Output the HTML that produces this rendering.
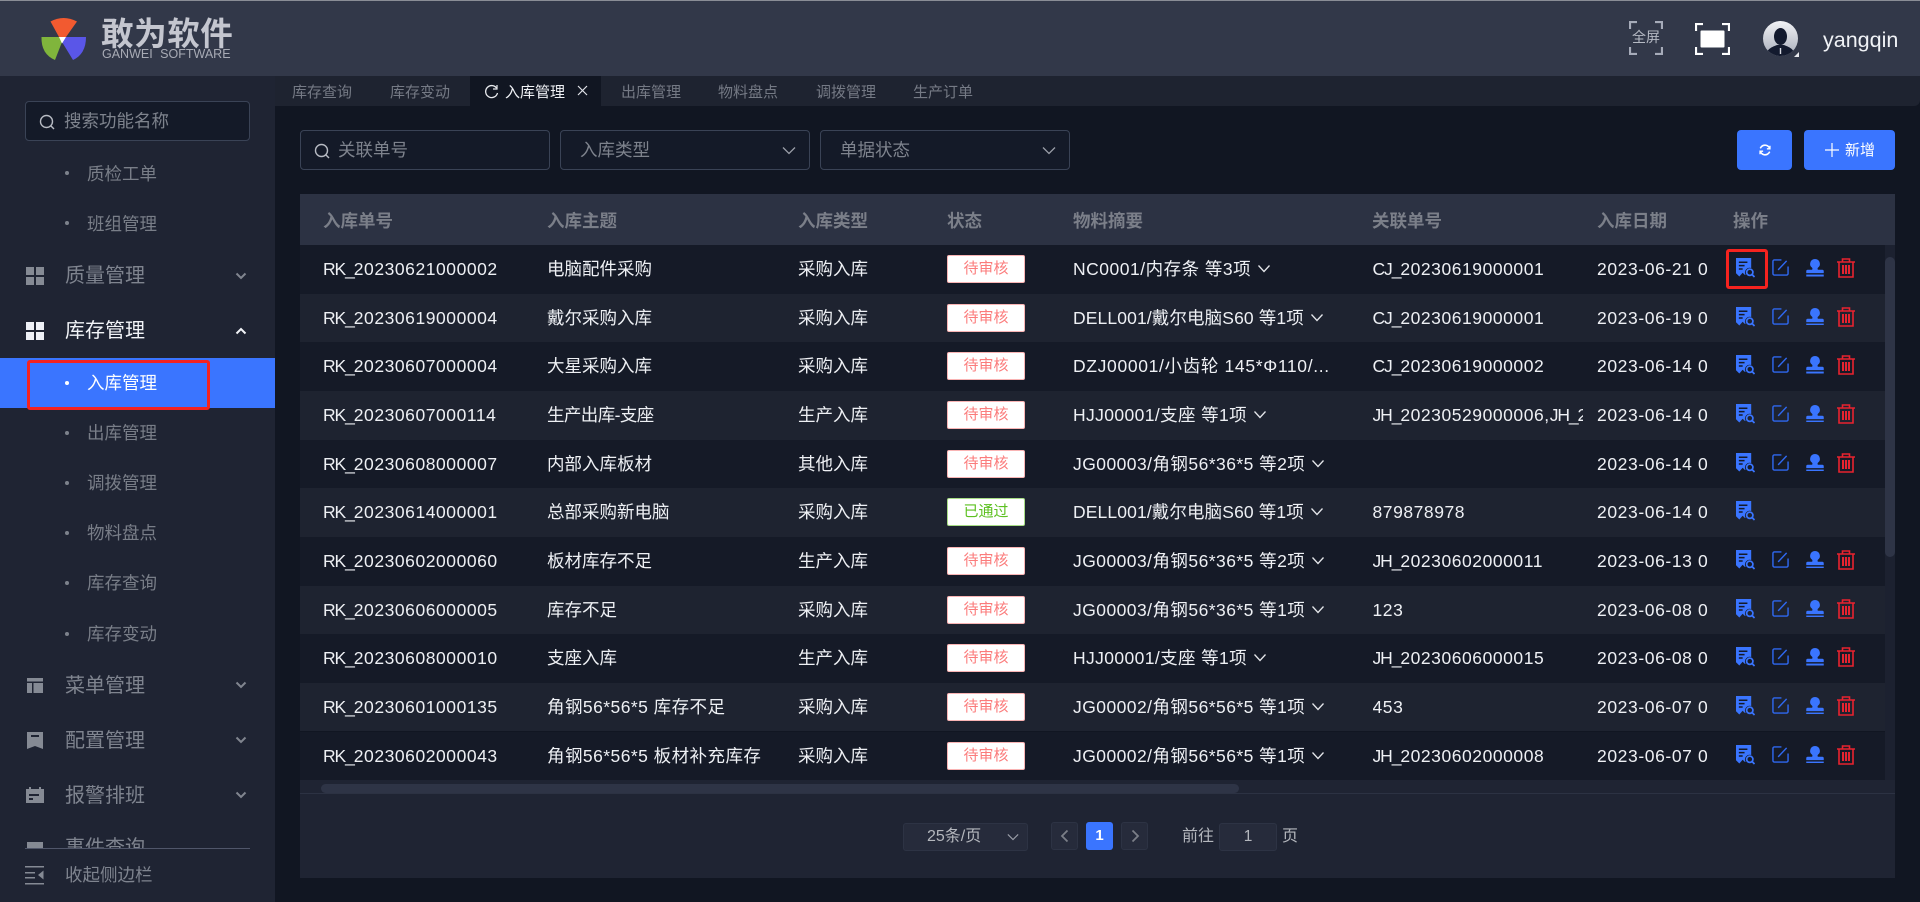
<!DOCTYPE html>
<html lang="zh"><head><meta charset="utf-8"><title>入库管理</title>
<style>
*{box-sizing:border-box}
html,body{margin:0;padding:0;width:1920px;height:902px;overflow:hidden;background:#111622;font-family:"Liberation Sans","Noto Sans CJK SC",sans-serif}
.a{position:absolute;white-space:nowrap}
#hd{left:0;top:0;width:1920px;height:76px;background:#323849;border-top:1px solid #8a8d96}
#sb{left:0;top:76px;width:275px;height:826px;background:#1f2433}
#tabs{left:275px;top:76px;width:1645px;height:30px;background:#1e2330;border-bottom-right-radius:6px}
#atab{left:470px;top:76px;width:131px;height:30px;background:#111622}
.tab{top:82px;font-size:15px;line-height:22px;color:#757a85}
.box{border:1px solid #3a4356;border-radius:4px;background:#141a28}
.ph{font-size:17.5px;color:#7e838d;line-height:26px}
.sub{left:87px;font-size:17.5px;line-height:26px;color:#797e88}
.dot{left:65px;width:4px;height:4px;border-radius:50%;background:#7d828c}
.top{left:65px;font-size:20px;line-height:30px;color:#7f848f}
.chev{left:235px}
.th{top:208px;font-size:17.5px;line-height:26px;font-weight:bold;color:#7b7f89}
.r{position:absolute;left:300px;width:1585px;height:48.65px;overflow:hidden}
.r.d{background:#151a27}.r.l{background:#1e2330}
.r span.t{position:absolute;top:11px;line-height:26px;font-size:17.5px;color:#eef0f4;white-space:nowrap}
.c1{left:23px;letter-spacing:.55px}.c2{left:247px}.c3{left:498px}
.c5{left:773px;letter-spacing:.35px}.c6{left:1072.5px;width:210px;overflow:hidden;letter-spacing:.55px}.c7{left:1297px;width:113px;overflow:hidden;letter-spacing:.6px}
i.p{font-style:normal;letter-spacing:-1.1px}
.tag{position:absolute;left:647px;top:10px;width:78px;height:28px;background:#fff;border:1px solid #f9b4b4;border-radius:2px;color:#fb7c7c;font-size:15px;line-height:26px;text-align:center}
.tag.g{border-color:#a7dd85;color:#5cc020}
.op{position:absolute;top:0;left:1410px;width:175px;height:100%}
.op svg{position:absolute}
svg.i1{left:26px;top:13px;width:19px;height:20px}svg.i2{left:62px;top:14px;width:17px;height:17px}svg.i3{left:96px;top:14px;width:18px;height:17.5px}svg.i4{left:127px;top:13px;width:18px;height:20px}
.cv{display:inline-block;vertical-align:2px;margin-left:6px;width:14px;height:9px}
</style></head><body>
<svg width="0" height="0" style="position:absolute">
<symbol id="doc" viewBox="0 0 20 21"><path d="M0 0H16V10.500A5 5 0 0 0 10 17.500L9.500 18 7 15.500 3.500 19.500 0 16Z" fill="#3a75ff"/><path d="M3 4.500H12M3 8H9M3 11.500H7" stroke="#141a28" stroke-width="1.600"/><circle cx="14.500" cy="15" r="3.300" fill="none" stroke="#3a75ff" stroke-width="1.800"/><path d="M17 17.500L19.500 20" stroke="#3a75ff" stroke-width="1.800"/></symbol>
<symbol id="edit" viewBox="0 0 18 18"><path d="M10 1H2.500A1.500 1.500 0 0 0 1 2.500V15.500A1.500 1.500 0 0 0 2.500 17H15.500A1.500 1.500 0 0 0 17 15.500V8M6.500 11.500L15.500 2" fill="none" stroke="#2f68f0" stroke-width="1.500"/></symbol>
<symbol id="stamp" viewBox="0 0 18 18"><path d="M9 0A5 5 0 0 0 6 9C6.500 9.500 6.500 10.500 6 11H1.500A1.500 1.500 0 0 0 0 12.500V14.500H18V12.500A1.500 1.500 0 0 0 16.500 11H12C11.500 10.500 11.500 9.500 12 9A5 5 0 0 0 9 0Z" fill="#3a75ff"/><rect x="0" y="16" width="18" height="2" fill="#3a75ff"/></symbol>
<symbol id="trash" viewBox="0 0 18 20"><path d="M0 4H18M5.500 4V1H12.500V4M2 4V19H16V4" fill="none" stroke="#e8232f" stroke-width="1.600"/><rect x="5" y="7" width="8" height="9" fill="#e8232f"/><path d="M7.500 7V16M10.500 7V16" stroke="#1c2130" stroke-width="1"/></symbol>
<symbol id="cv" viewBox="0 0 14 9"><path d="M1.500 1.500L7 7.500 12.500 1.500" fill="none" stroke="#e4e6ea" stroke-width="1.300"/></symbol>
<symbol id="mc" viewBox="0 0 12 8"><path d="M1.500 1.500L6 6 10.500 1.500" fill="none" stroke="#80858f" stroke-width="2"/></symbol>
<symbol id="sel" viewBox="0 0 14 9"><path d="M1 1.500L7 7.500 13 1.500" fill="none" stroke="#9a9ea8" stroke-width="1.300"/></symbol>
<symbol id="mag" viewBox="0 0 16 16"><circle cx="7.500" cy="7.500" r="6" fill="none" stroke="#b8bcc4" stroke-width="1.400"/><path d="M12 12L15 15" stroke="#b8bcc4" stroke-width="1.400"/></symbol>
</svg>

<div class="a" id="hd"></div>
<svg class="a" style="left:40px;top:16px" width="48" height="46" viewBox="40 16 48 46">
<path d="M50.500 21.500Q63.500 14.500 77 21.500L66 37H59Z" fill="#f25a30"/>
<path d="M41.500 37H59L62 42 55 60Q41 54 41.500 37Z" fill="#80b53c"/>
<path d="M66 37H86Q86 54 73 60L62 42Z" fill="#5a56e8"/>
<path d="M59 37H66L62 43.500Z" fill="#fff"/>
</svg>
<div class="a" style="left:101px;top:15px;font-size:32.500px;line-height:38px;font-weight:bold;color:#c4c6cf;letter-spacing:.6px">敢为软件</div>
<div class="a" style="left:102px;top:47px;font-size:12.500px;line-height:14px;color:#a8abb5;word-spacing:4px">GANWEI SOFTWARE</div>

<svg class="a" style="left:1629px;top:21px" width="34" height="34" viewBox="0 0 34 34" fill="none" stroke="#a6abb9" stroke-width="2.200"><path d="M1 8V1H8M26 1H33V8M1 26V33H8M26 33H33V26"/></svg>
<div class="a" style="left:1632px;top:27px;font-size:14px;line-height:21px;color:#b6bac4">全屏</div>
<svg class="a" style="left:1695px;top:23px" width="35" height="32" viewBox="0 0 35 32" fill="none" stroke="#fff" stroke-width="2.200"><path d="M1 8V1H8M27 1H34V8M1 24V31H8M27 31H34V24"/><rect x="5.500" y="7.500" width="24" height="17" rx="1" fill="#fff" stroke="none"/></svg>
<svg class="a" style="left:1763px;top:21px" width="36" height="36" viewBox="0 0 36 36"><defs><linearGradient id="av" x1="0" y1="0" x2="0" y2="1"><stop offset="0" stop-color="#f2f3f6"/><stop offset="1" stop-color="#a8adba"/></linearGradient><clipPath id="ac"><circle cx="17.500" cy="17.500" r="17.500"/></clipPath></defs><circle cx="17.500" cy="17.500" r="17.500" fill="url(#av)"/><g clip-path="url(#ac)"><ellipse cx="17.500" cy="15.500" rx="6.500" ry="8.500" fill="#131a2e"/><path d="M3 36C3 28 9 26 14 24H21C26 26 32 28 32 36Z" fill="#131a2e"/><path d="M16.800 27H18.200V33H16.800Z" fill="#d8dae2"/></g><path d="M36 36H31L36 31Z" fill="#e8e9ee"/></svg>
<div class="a" style="left:1823px;top:27px;font-size:21.500px;line-height:27px;color:#f0f2f6">yangqin</div>

<div class="a" id="sb"></div>
<div class="a box" style="left:25px;top:101px;width:225px;height:40px;background:#141a28"></div>
<svg class="a" style="left:39px;top:114px" width="16" height="16"><use href="#mag"/></svg>
<div class="a ph" style="left:64px;top:108px">搜索功能名称</div>

<div class="a dot" style="top:171px"></div><div class="a sub" style="top:161px">质检工单</div>
<div class="a dot" style="top:221px"></div><div class="a sub" style="top:211px">班组管理</div>

<svg class="a" style="left:26px;top:267px" width="18" height="18" fill="#858a94"><rect width="8" height="8"/><rect x="10" width="8" height="8"/><rect y="10" width="8" height="8"/><rect x="10" y="10" width="8" height="8"/></svg>
<div class="a top" style="top:261px">质量管理</div>
<svg class="a chev" style="top:272px" width="12" height="8"><use href="#mc"/></svg>

<svg class="a" style="left:26px;top:322px" width="18" height="18" fill="#eef0f6"><rect width="8" height="8"/><rect x="10" width="8" height="8"/><rect y="10" width="8" height="8"/><rect x="10" y="10" width="8" height="8"/></svg>
<div class="a top" style="top:316px;color:#f2f4f8">库存管理</div>
<svg class="a chev" style="top:327px" width="12" height="8" viewBox="0 0 12 8"><path d="M1.500 6.500L6 2 10.500 6.500" fill="none" stroke="#f2f4f8" stroke-width="2"/></svg>

<div class="a" style="left:0;top:358px;width:275px;height:50px;background:#3a75ff"></div>
<div class="a dot" style="top:381px;background:#fff"></div><div class="a sub" style="top:370px;color:#fff">入库管理</div>
<div class="a" style="left:27px;top:360px;width:183px;height:50px;border:3px solid #f5231f;border-radius:3px"></div>

<div class="a dot" style="top:431px"></div><div class="a sub" style="top:420px">出库管理</div>
<div class="a dot" style="top:481px"></div><div class="a sub" style="top:470px">调拨管理</div>
<div class="a dot" style="top:531px"></div><div class="a sub" style="top:520px">物料盘点</div>
<div class="a dot" style="top:581px"></div><div class="a sub" style="top:570px">库存查询</div>
<div class="a dot" style="top:632px"></div><div class="a sub" style="top:621px">库存变动</div>

<svg class="a" style="left:27px;top:678px" width="16" height="15" fill="#858a94"><rect width="16" height="3.500"/><rect y="5" width="5" height="10"/><rect x="6.500" y="5" width="9.500" height="10"/></svg>
<div class="a top" style="top:671px">菜单管理</div>
<svg class="a chev" style="top:681px" width="12" height="8"><use href="#mc"/></svg>

<svg class="a" style="left:27px;top:732px" width="16" height="17" fill="#858a94"><path d="M0 0H16V17L8 14 0 17ZM4 3V5H12V3Z" fill-rule="evenodd"/></svg>
<div class="a top" style="top:726px">配置管理</div>
<svg class="a chev" style="top:736px" width="12" height="8"><use href="#mc"/></svg>

<svg class="a" style="left:26px;top:786px" width="18" height="17" fill="#858a94"><path d="M0 3H3V1H5V3H13V1H15V3H18V17H0ZM3 8V10H13V8ZM3 12V14H7V12Z" fill-rule="evenodd"/></svg>
<div class="a top" style="top:781px">报警排班</div>
<svg class="a chev" style="top:791px" width="12" height="8"><use href="#mc"/></svg>

<div class="a" style="left:0;top:835px;width:275px;height:13px;overflow:hidden">
<div class="a" style="left:27px;top:7px;width:16px;height:14px;background:#858a94"></div>
<div class="a top" style="top:-2px">事件查询</div>
</div>
<div class="a" style="left:25px;top:848px;width:225px;height:1px;background:#50566a"></div>
<svg class="a" style="left:25px;top:866px" width="19" height="19" fill="#858a94"><rect width="19" height="1.500" y="0"/><rect width="10" height="1.500" y="6"/><rect width="10" height="1.500" y="11"/><rect width="19" height="1.500" y="17"/><path d="M18.500 4.500V13.500L13 9Z"/></svg>
<div class="a" style="left:65px;top:862px;font-size:17.500px;line-height:26px;color:#7f848f">收起侧边栏</div>

<div class="a" id="tabs"></div><div class="a" id="atab"></div>
<div class="a tab" style="left:292px">库存查询</div>
<div class="a tab" style="left:390px">库存变动</div>
<svg class="a" style="left:484px;top:84px" width="15" height="15" viewBox="0 0 15 15"><path d="M12.500 4A6 6 0 1 0 13.500 9" fill="none" stroke="#e8eaee" stroke-width="1.300"/><path d="M13 1V5H9" fill="none" stroke="#e8eaee" stroke-width="1.200"/></svg>
<div class="a tab" style="left:505px;color:#f0f2f6">入库管理</div>
<svg class="a" style="left:577px;top:85px" width="11" height="11"><path d="M1 1L10 10M10 1L1 10" stroke="#dfe2e8" stroke-width="1.200"/></svg>
<div class="a tab" style="left:621px">出库管理</div>
<div class="a tab" style="left:718px">物料盘点</div>
<div class="a tab" style="left:816px">调拨管理</div>
<div class="a tab" style="left:913px">生产订单</div>

<div class="a box" style="left:300px;top:130px;width:250px;height:40px"></div>
<svg class="a" style="left:314px;top:143px" width="16" height="16"><use href="#mag"/></svg>
<div class="a ph" style="left:338px;top:137px">关联单号</div>
<div class="a box" style="left:560px;top:130px;width:250px;height:40px"></div>
<div class="a ph" style="left:580px;top:137px">入库类型</div>
<svg class="a" style="left:782px;top:146px" width="14" height="9"><use href="#sel"/></svg>
<div class="a box" style="left:820px;top:130px;width:250px;height:40px"></div>
<div class="a ph" style="left:840px;top:137px">单据状态</div>
<svg class="a" style="left:1042px;top:146px" width="14" height="9"><use href="#sel"/></svg>

<div class="a" style="left:1737px;top:130px;width:55px;height:40px;background:#3a75ff;border-radius:4px"></div>
<svg class="a" style="left:1759px;top:144px" width="12" height="12" viewBox="0 0 14 14" fill="none" stroke="#fff" stroke-width="1.800"><path d="M12.500 5.500A5.800 5.800 0 0 0 2.500 3.500L1.500 5M1.500 8.500A5.800 5.800 0 0 0 11.500 10.500L12.500 9"/><path d="M12.800 2V5.600H9.200M1.200 12V8.400H4.800" stroke-width="1.500"/></svg>
<div class="a" style="left:1804px;top:130px;width:91px;height:40px;background:#3a75ff;border-radius:4px"></div>
<svg class="a" style="left:1825px;top:143px" width="14" height="14"><path d="M7 0V14M0 7H14" stroke="#fff" stroke-width="1.200"/></svg>
<div class="a" style="left:1845px;top:138px;font-size:15px;line-height:25px;color:#fff">新增</div>

<div class="a" style="left:300px;top:194px;width:1595px;height:51px;background:#2c3243"></div>
<div class="a th" style="left:323px">入库单号</div>
<div class="a th" style="left:547px">入库主题</div>
<div class="a th" style="left:798px">入库类型</div>
<div class="a th" style="left:947px">状态</div>
<div class="a th" style="left:1073px">物料摘要</div>
<div class="a th" style="left:1372px">关联单号</div>
<div class="a th" style="left:1597px">入库日期</div>
<div class="a th" style="left:1733px">操作</div>

<div class="r d" style="top:245px"><span class="t c1"><i class="p">RK_</i>20230621000002</span><span class="t c2">电脑配件采购</span><span class="t c3">采购入库</span><div class="tag">待审核</div><span class="t c5" style="letter-spacing:.5px">NC0001/内存条 等3项<svg class="cv"><use href="#cv"/></svg></span><span class="t c6"><i class="p">CJ_</i>20230619000001</span><span class="t c7">2023-06-21 0</span><div class="op"><svg class="i1"><use href="#doc"/></svg><svg class="i2"><use href="#edit"/></svg><svg class="i3"><use href="#stamp"/></svg><svg class="i4"><use href="#trash"/></svg></div></div>
<div class="r l" style="top:293.650px"><span class="t c1"><i class="p">RK_</i>20230619000004</span><span class="t c2">戴尔采购入库</span><span class="t c3">采购入库</span><div class="tag">待审核</div><span class="t c5" style="letter-spacing:.12px">DELL001/戴尔电脑S60 等1项<svg class="cv"><use href="#cv"/></svg></span><span class="t c6"><i class="p">CJ_</i>20230619000001</span><span class="t c7">2023-06-19 0</span><div class="op"><svg class="i1"><use href="#doc"/></svg><svg class="i2"><use href="#edit"/></svg><svg class="i3"><use href="#stamp"/></svg><svg class="i4"><use href="#trash"/></svg></div></div>
<div class="r d" style="top:342.300px"><span class="t c1"><i class="p">RK_</i>20230607000004</span><span class="t c2">大星采购入库</span><span class="t c3">采购入库</span><div class="tag">待审核</div><span class="t c5" style="letter-spacing:.66px">DZJ00001/小齿轮 145*Φ110/...</span><span class="t c6"><i class="p">CJ_</i>20230619000002</span><span class="t c7">2023-06-14 0</span><div class="op"><svg class="i1"><use href="#doc"/></svg><svg class="i2"><use href="#edit"/></svg><svg class="i3"><use href="#stamp"/></svg><svg class="i4"><use href="#trash"/></svg></div></div>
<div class="r l" style="top:390.950px"><span class="t c1"><i class="p">RK_</i>20230607000114</span><span class="t c2" style="letter-spacing:-.6px">生产出库-支座</span><span class="t c3">生产入库</span><div class="tag">待审核</div><span class="t c5" style="letter-spacing:.38px">HJJ00001/支座 等1项<svg class="cv"><use href="#cv"/></svg></span><span class="t c6"><i class="p">JH_</i>20230529000006,<i class="p">JH_</i>20230529000007</span><span class="t c7">2023-06-14 0</span><div class="op"><svg class="i1"><use href="#doc"/></svg><svg class="i2"><use href="#edit"/></svg><svg class="i3"><use href="#stamp"/></svg><svg class="i4"><use href="#trash"/></svg></div></div>
<div class="r d" style="top:439.600px"><span class="t c1"><i class="p">RK_</i>20230608000007</span><span class="t c2">内部入库板材</span><span class="t c3">其他入库</span><div class="tag">待审核</div><span class="t c5" style="letter-spacing:.45px">JG00003/角钢56*36*5 等2项<svg class="cv"><use href="#cv"/></svg></span><span class="t c7">2023-06-14 0</span><div class="op"><svg class="i1"><use href="#doc"/></svg><svg class="i2"><use href="#edit"/></svg><svg class="i3"><use href="#stamp"/></svg><svg class="i4"><use href="#trash"/></svg></div></div>
<div class="r l" style="top:488.250px"><span class="t c1"><i class="p">RK_</i>20230614000001</span><span class="t c2">总部采购新电脑</span><span class="t c3">采购入库</span><div class="tag g">已通过</div><span class="t c5" style="letter-spacing:.12px">DELL001/戴尔电脑S60 等1项<svg class="cv"><use href="#cv"/></svg></span><span class="t c6">879878978</span><span class="t c7">2023-06-14 0</span><div class="op"><svg class="i1"><use href="#doc"/></svg></div></div>
<div class="r d" style="top:536.900px"><span class="t c1"><i class="p">RK_</i>20230602000060</span><span class="t c2">板材库存不足</span><span class="t c3">生产入库</span><div class="tag">待审核</div><span class="t c5" style="letter-spacing:.45px">JG00003/角钢56*36*5 等2项<svg class="cv"><use href="#cv"/></svg></span><span class="t c6"><i class="p">JH_</i>20230602000011</span><span class="t c7">2023-06-13 0</span><div class="op"><svg class="i1"><use href="#doc"/></svg><svg class="i2"><use href="#edit"/></svg><svg class="i3"><use href="#stamp"/></svg><svg class="i4"><use href="#trash"/></svg></div></div>
<div class="r l" style="top:585.550px"><span class="t c1"><i class="p">RK_</i>20230606000005</span><span class="t c2">库存不足</span><span class="t c3">采购入库</span><div class="tag">待审核</div><span class="t c5" style="letter-spacing:.45px">JG00003/角钢56*36*5 等1项<svg class="cv"><use href="#cv"/></svg></span><span class="t c6">123</span><span class="t c7">2023-06-08 0</span><div class="op"><svg class="i1"><use href="#doc"/></svg><svg class="i2"><use href="#edit"/></svg><svg class="i3"><use href="#stamp"/></svg><svg class="i4"><use href="#trash"/></svg></div></div>
<div class="r d" style="top:634.200px"><span class="t c1"><i class="p">RK_</i>20230608000010</span><span class="t c2">支座入库</span><span class="t c3">生产入库</span><div class="tag">待审核</div><span class="t c5" style="letter-spacing:.38px">HJJ00001/支座 等1项<svg class="cv"><use href="#cv"/></svg></span><span class="t c6"><i class="p">JH_</i>20230606000015</span><span class="t c7">2023-06-08 0</span><div class="op"><svg class="i1"><use href="#doc"/></svg><svg class="i2"><use href="#edit"/></svg><svg class="i3"><use href="#stamp"/></svg><svg class="i4"><use href="#trash"/></svg></div></div>
<div class="r l" style="top:682.850px"><span class="t c1"><i class="p">RK_</i>20230601000135</span><span class="t c2" style="letter-spacing:.45px">角钢56*56*5 库存不足</span><span class="t c3">采购入库</span><div class="tag">待审核</div><span class="t c5" style="letter-spacing:.45px">JG00002/角钢56*56*5 等1项<svg class="cv"><use href="#cv"/></svg></span><span class="t c6">453</span><span class="t c7">2023-06-07 0</span><div class="op"><svg class="i1"><use href="#doc"/></svg><svg class="i2"><use href="#edit"/></svg><svg class="i3"><use href="#stamp"/></svg><svg class="i4"><use href="#trash"/></svg></div></div>
<div class="r d" style="top:731.500px"><span class="t c1"><i class="p">RK_</i>20230602000043</span><span class="t c2" style="letter-spacing:.45px">角钢56*56*5 板材补充库存</span><span class="t c3">采购入库</span><div class="tag">待审核</div><span class="t c5" style="letter-spacing:.45px">JG00002/角钢56*56*5 等1项<svg class="cv"><use href="#cv"/></svg></span><span class="t c6"><i class="p">JH_</i>20230602000008</span><span class="t c7">2023-06-07 0</span><div class="op"><svg class="i1"><use href="#doc"/></svg><svg class="i2"><use href="#edit"/></svg><svg class="i3"><use href="#stamp"/></svg><svg class="i4"><use href="#trash"/></svg></div></div>

<div class="a" style="left:1885px;top:245px;width:10px;height:535px;background:#1c2130"></div>
<div class="a" style="left:1885px;top:257px;width:10px;height:300px;background:#2e3446;border-radius:5px"></div>
<div class="a" style="left:1726px;top:249px;width:42px;height:40px;border:3px solid #f5231f;border-radius:3px"></div>

<div class="a" style="left:300px;top:780px;width:1595px;height:98px;background:#1f2433"></div>
<div class="a" style="left:300px;top:793px;width:1595px;height:1px;background:#2c3243"></div>
<div class="a" style="left:321px;top:784px;width:918px;height:9px;background:#2e3446;border-radius:5px"></div>

<div class="a" style="left:903px;top:823px;width:125px;height:28px;background:#262b3b;border:1px solid #2d3344;border-radius:3px"></div>
<div class="a" style="left:927px;top:825px;font-size:16px;line-height:24px;color:#b4b7bd">25条/页</div>
<svg class="a" style="left:1007px;top:833px" width="12" height="8" viewBox="0 0 14 9"><use href="#sel"/></svg>
<div class="a" style="left:1051px;top:822px;width:27px;height:28px;background:#262b3b;border:1px solid #2d3344;border-radius:3px"></div>
<svg class="a" style="left:1060px;top:829px" width="9" height="14"><path d="M7.500 1.500L2 7 7.500 12.500" fill="none" stroke="#7b7f88" stroke-width="1.800"/></svg>
<div class="a" style="left:1086px;top:822px;width:27px;height:28px;background:#3a75ff;border-radius:3px;color:#fff;font-size:15px;font-weight:bold;line-height:28px;text-align:center">1</div>
<div class="a" style="left:1121px;top:822px;width:27px;height:28px;background:#262b3b;border:1px solid #2d3344;border-radius:3px"></div>
<svg class="a" style="left:1131px;top:829px" width="9" height="14"><path d="M1.500 1.500L7 7 1.500 12.500" fill="none" stroke="#7b7f88" stroke-width="1.800"/></svg>
<div class="a" style="left:1182px;top:825px;font-size:16px;line-height:24px;color:#b4b7bd">前往</div>
<div class="a" style="left:1219px;top:823px;width:58px;height:28px;background:#262b3b;border:1px solid #2d3344;border-radius:3px;text-align:center;font-size:15.500px;line-height:25px;color:#b4b7bd">1</div>
<div class="a" style="left:1282px;top:825px;font-size:16px;line-height:24px;color:#b4b7bd">页</div>
</body></html>
